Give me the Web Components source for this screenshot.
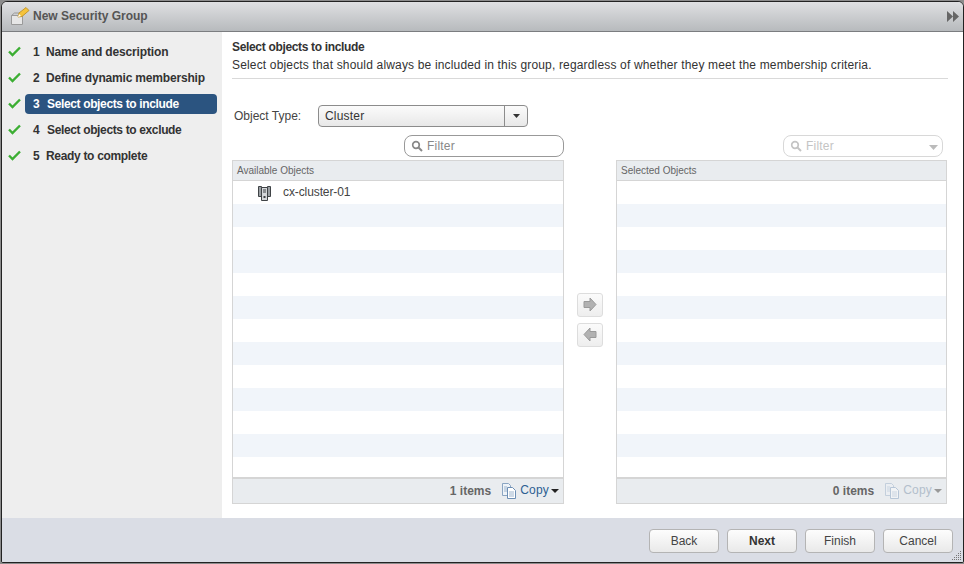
<!DOCTYPE html>
<html>
<head>
<meta charset="utf-8">
<title>New Security Group</title>
<style>
  html, body { margin: 0; height: 100%; background: #8c8c8c; overflow: hidden; }
  body { font: 12px "Liberation Sans", Arial, sans-serif; color: #333; }
</style>
</head>
<body>
<template id="tpl-window">
  <style>
    :host { display: flex; flex-direction: column; box-sizing: border-box; width: 963px; height: 562px; margin: 1px 0 0 1px; border: 1px solid #222; border-radius: 6px 6px 2px 2px; background: #fff; overflow: hidden; position: relative; }
    header { flex: none; display: flex; align-items: center; padding: 0 4px 2px 8px; box-sizing: content-box; height: 27px; background: linear-gradient(#dfe0e2, #b7babd); border-bottom: 1px solid #7b7d80; color: #555; font-size: 12px; font-weight: bold; }
    header svg { flex: none; }
    .title { margin-left: 3px; flex: 1; }
    .ff { margin-top: 2px; }
    .body { flex: 1; display: flex; min-height: 0; }
    .side { width: 220px; flex: none; background: #eeeeee; padding: 7px 0 0 0; box-sizing: border-box; display: flex; flex-direction: column; gap: 0; }
    .main { flex: 1; min-width: 0; }
    footer { height: 44px; flex: none; background: #dadde5; display: flex; align-items: flex-start; justify-content: flex-end; gap: 8px; padding: 11px 10px 0 0; box-sizing: border-box; position: relative; }
    .grip { position: absolute; right: 0; bottom: 0; }
  </style>
  <header>
    <svg width="20" height="20" viewBox="0 0 20 20">
      <path d="M1.500 9.500h11v9h-11z" fill="#e6e6e6" stroke="#9a9a9a"/>
      <path d="M1.500 9.500l3-2.500h6" fill="none" stroke="#9a9a9a"/>
      <path d="M8 11l1-4 7-5.500 3 3-7 6z" fill="#f5c33b" stroke="#b98a1c" stroke-width=".8"/>
      <path d="M8 11l1-3 2 2z" fill="#fff"/>
    </svg>
    <span class="title"><slot name="title"></slot></span>
    <svg class="ff" width="12" height="11" viewBox="0 0 12 11"><path d="M0 0l6 5.500-6 5.500zM6 0l6 5.500-6 5.500z" fill="#666"/></svg>
  </header>
  <div class="body">
    <div class="side"><slot name="steps"></slot></div>
    <div class="main"><slot></slot></div>
  </div>
  <footer>
    <slot name="buttons"></slot>
    <svg class="grip" width="12" height="12" viewBox="0 0 12 12" fill="#777">
      <rect x="9" y="1" width="1" height="1"/><rect x="7" y="3" width="1" height="1"/><rect x="9" y="3" width="1" height="1"/>
      <rect x="5" y="5" width="1" height="1"/><rect x="7" y="5" width="1" height="1"/><rect x="9" y="5" width="1" height="1"/>
      <rect x="3" y="7" width="1" height="1"/><rect x="5" y="7" width="1" height="1"/><rect x="7" y="7" width="1" height="1"/><rect x="9" y="7" width="1" height="1"/>
      <rect x="1" y="9" width="1" height="1"/><rect x="3" y="9" width="1" height="1"/><rect x="5" y="9" width="1" height="1"/><rect x="7" y="9" width="1" height="1"/><rect x="9" y="9" width="1" height="1"/>
    </svg>
  </footer>
</template>

<template id="tpl-step">
  <style>
    :host { display: flex; align-items: center; height: 26px; font-size: 12px; font-weight: bold; color: #333; letter-spacing: var(--ls, -.18px); }
    svg { flex: none; margin-left: 6px; margin-top: -2px; }
    .pill { margin-left: 4px; width: 192px; height: 20px; box-sizing: border-box; padding-left: 8px; display: flex; align-items: center; border-radius: 4px; }
    :host([active]) .pill { background: #2b5480; color: #fff; }
    .num { width: var(--nw, 13px); flex: none; letter-spacing: 0; }
  </style>
  <svg width="13" height="11" viewBox="0 0 13 11"><path d="M1 5.500l3.500 3.500L12 1.500" fill="none" stroke="#3cae33" stroke-width="2.400"/></svg>
  <div class="pill"><span class="num"></span><slot></slot></div>
</template>

<template id="tpl-btn">
  <style>
    :host { display: block; box-sizing: border-box; width: 70px; height: 24px; border: 1px solid #b4b4b4; border-radius: 4px; background: linear-gradient(#fdfdfd, #e9e9e9); font-size: 12px; line-height: 22px; text-align: center; color: #444; }
    :host([primary]) { font-weight: bold; color: #333; }
  </style>
  <slot></slot>
</template>

<template id="tpl-combo">
  <style>
    :host { display: flex; width: 210px; height: 22px; box-sizing: border-box; border: 1px solid #8c8c8c; border-radius: 4px; background: linear-gradient(#fbfbfb, #e8e8e8); font-size: 12px; line-height: 20px; color: #333; letter-spacing: .2px; }
    .v { flex: 1; padding-left: 6px; }
    .b { width: 22px; flex: none; border-left: 1px solid #8c8c8c; display: flex; align-items: center; justify-content: center; }
  </style>
  <div class="v"><slot></slot></div>
  <div class="b"><svg width="7" height="4" viewBox="0 0 7 4"><path d="M0 0h7L3.500 4z" fill="#333"/></svg></div>
</template>

<template id="tpl-filter">
  <style>
    :host { display: flex; align-items: center; box-sizing: border-box; width: 160px; height: 22px; border: 1px solid #999; border-radius: 8px; background: #fff; font-size: 12px; color: #888; padding-left: 6px; position: relative; letter-spacing: .2px; }
    :host([disabled]) { border-color: #d8d8d8; color: #c4c4c4; margin-right: 4px; }
    svg.q { margin-right: 4px; flex: none; }
    .caret { display: none; position: absolute; right: 4px; top: 9px; }
    :host([disabled]) .caret { display: block; }
  </style>
  <svg class="q" width="12" height="12" viewBox="0 0 12 12"><circle cx="5" cy="5" r="3.300" fill="none" stroke="currentColor" stroke-width="1.700"/><path d="M7.500 7.500l3.500 3.500" stroke="currentColor" stroke-width="2"/></svg>
  <slot></slot>
  <svg class="caret" width="9" height="5" viewBox="0 0 9 5"><path d="M0 0h9L4.500 5z" fill="#bbb"/></svg>
</template>

<template id="tpl-grid">
  <style>
    :host { display: flex; flex-direction: column; box-sizing: border-box; height: 344px; border: 1px solid #d5d5d5; background: #fff; }
    .head { height: 20px; flex: none; box-sizing: border-box; background: #e9ecef; border-bottom: 1px solid #d5d5d5; font-size: 10px; line-height: 19px; padding-left: 4px; color: #666; }
    .rows { flex: 1; min-height: 0; overflow: hidden; }
    .foot { height: 26px; flex: none; box-sizing: border-box; background: #e9ecef; border-top: 2px solid #d5d5d5; display: flex; align-items: center; justify-content: flex-end; padding-right: 4px; font-size: 12px; color: #666; }
    .count { font-weight: bold; margin-right: 10px; }
    .copy { display: flex; align-items: center; color: #2d5f93; letter-spacing: .2px; }
    .copy .lbl { margin-top: -2px; }
    .copy svg.doc { margin-right: 3px; }
    .copy svg.car { margin-left: 2px; }
    .dark { fill: #222; }
    :host([empty]) .copy { color: #b3bfcc; }
    :host([empty]) .doc { opacity: .4; }
    :host([empty]) .dark { fill: #999; }
  </style>
  <div class="head"></div>
  <div class="rows"><slot></slot></div>
  <div class="foot">
    <span class="count"></span>
    <span class="copy">
      <svg class="doc" width="16" height="16" viewBox="0 0 16 16">
        <path d="M1.500 .5h6l2 2v10h-8z" fill="#eef3f8" stroke="#8ba5c2"/>
        <path d="M6.500 4.500h5l3 3v8h-8z" fill="#fff" stroke="#6d8fb5"/>
        <path d="M8 9h5M8 11h5M8 13h5M3 4h3M3 6h3M3 8h3" stroke="#9db4cd"/>
      </svg><span class="lbl">Copy</span><svg class="car" width="8" height="4" viewBox="0 0 8 4"><path class="dark" d="M0 0h8L4 4z"/></svg>
    </span>
  </div>
</template>

<template id="tpl-row">
  <style>
    :host { display: flex; align-items: center; height: 23px; box-sizing: border-box; background: #fff; font-size: 12px; color: #444; letter-spacing: -.1px; padding-bottom: 2px; }
    :host([alt]) { background: #f1f5fa; }
    svg { margin-left: 25px; margin-right: 12px; flex: none; margin-top: 2px; }
    :host([plain]) svg { display: none; }
  </style>
  <svg width="13" height="16" viewBox="0 0 13 16">
    <path d="M.5 1.500h3v10h-3zM9.500 1.500h3v10h-3z" fill="#9a9fa3" stroke="#3f4346"/>
    <path d="M3.500 2.500h6v13h-6z" fill="#d4d7da" stroke="#3f4346"/>
    <path d="M5 5h3M5 7h3" stroke="#3f4346"/>
    <rect x="5.500" y="11" width="2" height="2" fill="#3f4346"/>
  </svg>
  <slot></slot>
</template>

<template id="tpl-arrow">
  <style>
    :host { display: flex; align-items: center; justify-content: center; box-sizing: border-box; width: 26px; height: 24px; border: 1px solid #ddd; border-radius: 3px; background: linear-gradient(#fbfbfb, #eeeeee); }
    :host([left]) svg { transform: scaleX(-1); }
  </style>
  <svg width="14" height="15" viewBox="0 0 14 15"><path d="M1 4.500h6V1l6 6.500L7 14v-3.500H1z" fill="#b2b2b2" stroke="#9a9a9a"/></svg>
</template>

<template id="tpl-objects-page">
  <style>
    :host { display: block; padding: 7px 15px 0 10px; box-sizing: border-box; height: 100%; }
    .hd { font-size: 12px; line-height: 16px; color: #333; border-bottom: 1px solid #d9d9d9; height: 40px; box-sizing: border-box; letter-spacing: .165px; }
    .hd b { display: block; letter-spacing: -.33px; margin-bottom: 2px; }
    .type { display: flex; align-items: center; margin-top: 26px; margin-left: 2px; font-size: 12px; color: #444; }
    .type span { width: 84px; flex: none; }
    .lists { display: grid; grid-template-columns: 332px 52px 331px; margin-top: 8px; }
    .col { display: flex; flex-direction: column; }
    .fw { display: flex; justify-content: flex-end; height: 25px; align-items: flex-start; }
    .mid { display: flex; flex-direction: column; align-items: center; justify-content: center; gap: 6px; }
  </style>
  <div class="hd"><b>Select objects to include</b>Select objects that should always be included in this group, regardless of whether they meet the membership criteria.</div>
  <div class="type"><span>Object Type:</span><x-combo>Cluster</x-combo></div>
  <div class="lists">
    <div class="col">
      <div class="fw"><x-filter>Filter</x-filter></div>
      <slot name="available"></slot>
    </div>
    <div class="mid"><x-arrow></x-arrow><x-arrow left></x-arrow></div>
    <div class="col">
      <div class="fw"><x-filter disabled>Filter</x-filter></div>
      <slot name="selected"></slot>
    </div>
  </div>
</template>

<x-window>
  <span slot="title">New Security Group</span>
  <x-step slot="steps" num="1" style="--ls:-.15px">Name and description</x-step>
  <x-step slot="steps" num="2" style="--ls:-.18px">Define dynamic membership</x-step>
  <x-step slot="steps" num="3" active style="--ls:-.36px;--nw:14px">Select objects to include</x-step>
  <x-step slot="steps" num="4" style="--ls:-.36px;--nw:14px">Select objects to exclude</x-step>
  <x-step slot="steps" num="5" style="--ls:-.32px">Ready to complete</x-step>
  <x-objects-page>
    <x-grid slot="available" label="Available Objects" count="1 items" first="cx-cluster-01"></x-grid>
    <x-grid slot="selected" label="Selected Objects" count="0 items" empty></x-grid>
  </x-objects-page>
  <x-btn slot="buttons">Back</x-btn>
  <x-btn slot="buttons" primary>Next</x-btn>
  <x-btn slot="buttons">Finish</x-btn>
  <x-btn slot="buttons">Cancel</x-btn>
</x-window>

<script>
  // plain elements that only stamp their template
  function plain(tag, tplId, setup) {
    customElements.define(tag, class extends HTMLElement {
      constructor() {
        super();
        this.attachShadow({ mode: 'open' });
        this.shadowRoot.appendChild(document.getElementById(tplId).content.cloneNode(true));
      }
      connectedCallback() {
        if (setup) setup(this);
      }
    });
  }
  plain('x-window', 'tpl-window');
  plain('x-step', 'tpl-step', el => {
    el.shadowRoot.querySelector('.num').textContent = el.getAttribute('num');
  });
  plain('x-btn', 'tpl-btn');
  plain('x-combo', 'tpl-combo');
  plain('x-filter', 'tpl-filter');
  plain('x-arrow', 'tpl-arrow');
  plain('x-row', 'tpl-row');
  plain('x-objects-page', 'tpl-objects-page');
  plain('x-grid', 'tpl-grid', el => {
    el.shadowRoot.querySelector('.head').textContent = el.getAttribute('label');
    el.shadowRoot.querySelector('.count').textContent = el.getAttribute('count');
    if (el.children.length) return;
    // 13 striped rows, the first one can carry an object
    for (let i = 0; i < 13; i++) {
      const row = document.createElement('x-row');
      if (i % 2) row.setAttribute('alt', '');
      if (i === 0 && el.hasAttribute('first')) {
        row.textContent = el.getAttribute('first');
      } else {
        row.setAttribute('plain', '');
      }
      el.appendChild(row);
    }
  });
</script>
</body>
</html>
